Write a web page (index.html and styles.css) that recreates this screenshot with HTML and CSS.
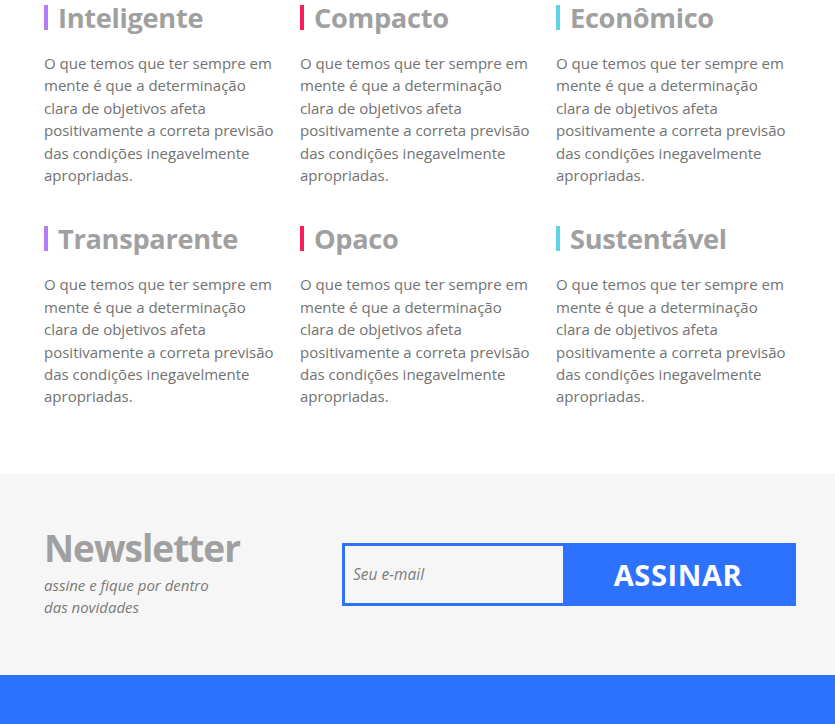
FILE: index.html
```html
<!DOCTYPE html>
<html lang="pt-BR">
<head>
<meta charset="utf-8">
<title>Features</title>
<link rel="stylesheet" href="styles.css">
</head>
<body>
<section class="features">
  <div class="grid">
    <article class="feature">
      <h2 class="feature-title purple">Inteligente</h2>
      <p class="feature-text">O que temos que ter sempre em mente é que a determinação clara de objetivos afeta positivamente a correta previsão das condições inegavelmente apropriadas.</p>
    </article>
    <article class="feature">
      <h2 class="feature-title red">Compacto</h2>
      <p class="feature-text">O que temos que ter sempre em mente é que a determinação clara de objetivos afeta positivamente a correta previsão das condições inegavelmente apropriadas.</p>
    </article>
    <article class="feature">
      <h2 class="feature-title cyan">Econômico</h2>
      <p class="feature-text">O que temos que ter sempre em mente é que a determinação clara de objetivos afeta positivamente a correta previsão das condições inegavelmente apropriadas.</p>
    </article>
    <article class="feature">
      <h2 class="feature-title purple">Transparente</h2>
      <p class="feature-text">O que temos que ter sempre em mente é que a determinação clara de objetivos afeta positivamente a correta previsão das condições inegavelmente apropriadas.</p>
    </article>
    <article class="feature">
      <h2 class="feature-title red">Opaco</h2>
      <p class="feature-text">O que temos que ter sempre em mente é que a determinação clara de objetivos afeta positivamente a correta previsão das condições inegavelmente apropriadas.</p>
    </article>
    <article class="feature">
      <h2 class="feature-title cyan">Sustentável</h2>
      <p class="feature-text">O que temos que ter sempre em mente é que a determinação clara de objetivos afeta positivamente a correta previsão das condições inegavelmente apropriadas.</p>
    </article>
  </div>
</section>

<section class="newsletter">
  <div class="newsletter-inner">
    <div class="newsletter-info">
      <h2 class="newsletter-title">Newsletter</h2>
      <p class="newsletter-sub">assine e fique por dentro das novidades</p>
    </div>
    <form class="newsletter-form">
      <input class="newsletter-input" type="email" placeholder="Seu e-mail">
      <button class="newsletter-btn" type="button">ASSINAR</button>
    </form>
  </div>
</section>

<footer class="footer"></footer>
</body>
</html>
```
FILE: styles.css
```css
* { box-sizing: border-box; }

body {
  margin: 0;
  background: #ffffff;
  font-family: "Open Sans", "Noto Sans", sans-serif;
}

.features {
  padding: 2px 43px 66px 44px;
}

.grid {
  display: grid;
  grid-template-columns: repeat(3, 236px);
  column-gap: 20px;
  row-gap: 37px;
}

.feature-title {
  display: flex;
  align-items: center;
  margin: 0;
  height: 31px;
  line-height: 31px;
  font-size: 27.2px;
  font-weight: 700;
  color: #a0a0a0;
  letter-spacing: -0.3px;
}

.feature-title::before {
  content: "";
  width: 4px;
  height: 25px;
  margin-right: 10px;
  flex: none;
}

.feature-title.purple::before { background: #b27dfb; }
.feature-title.red::before { background: #fd1f58; }
.feature-title.cyan::before { background: #5cd4e6; }

.feature-text {
  margin: 19px 0 0;
  font-size: 15px;
  line-height: 22.4px;
  color: #727272;
}

.newsletter {
  background: #f6f6f6;
  height: 201px;
  padding: 0 39px 0 44px;
  display: flex;
  align-items: center;
}

.newsletter-inner {
  display: flex;
  align-items: center;
  width: 100%;
}

.newsletter-info {
  width: 298px;
  flex: none;
  margin-bottom: 5px;
}

.newsletter-title {
  margin: 0;
  font-size: 37px;
  line-height: 44px;
  font-weight: 700;
  color: #a0a0a0;
  letter-spacing: -1px;
}

.newsletter-sub {
  margin: 4px 0 0;
  width: 185px;
  font-size: 15px;
  line-height: 22px;
  font-style: italic;
  color: #7a7a7a;
}

.newsletter-form {
  flex: 1;
  display: flex;
  height: 63px;
  border: 3px solid #2d71ff;
  background: #2d71ff;
  margin: 0;
}

.newsletter-input {
  width: 218px;
  flex: none;
  border: none;
  outline: none;
  background: #f6f6f6;
  padding: 0 8px;
  font-family: inherit;
  font-size: 15.5px;
  font-style: italic;
  color: #555;
}

.newsletter-input::placeholder {
  color: #7d7d7d;
}

.newsletter-btn {
  flex: 1;
  border: none;
  background: #2d71ff;
  color: #ffffff;
  font-family: inherit;
  font-size: 29px;
  font-weight: 700;
  letter-spacing: 0.6px;
  padding: 0;
  cursor: pointer;
}

.footer {
  background: #2d71ff;
  height: 50px;
}
```
